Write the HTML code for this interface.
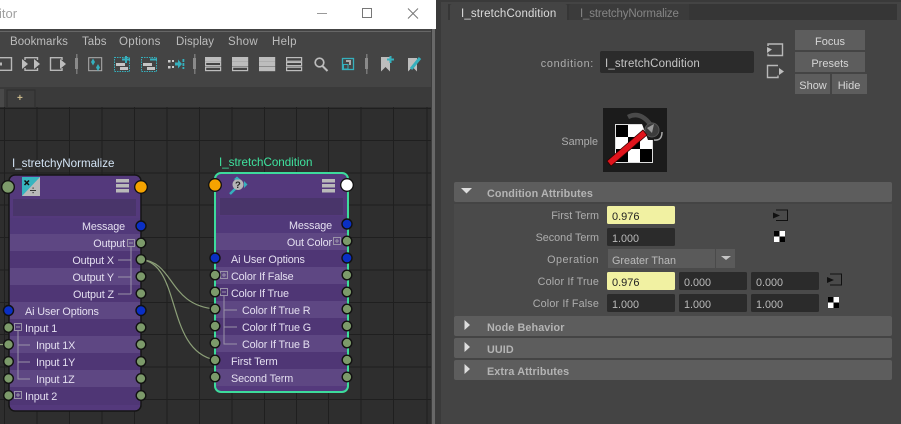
<!DOCTYPE html>
<html><head><meta charset="utf-8"><style>
html,body{margin:0;padding:0;background:#444;width:901px;height:424px;overflow:hidden}
svg{display:block}
text{font-family:"Liberation Sans",sans-serif;font-size:11px}
.r{text-anchor:end}
.n{fill:#e4dff0;font-size:10.8px;letter-spacing:-.12px}
.l{fill:#adadad;font-size:10.8px}
.v{fill:#bbb;font-size:10.8px}
.m{fill:#bcbcbc;font-size:11.5px;letter-spacing:.05px}
.h{fill:#b4b4b4;font-size:10.8px;font-weight:bold;letter-spacing:.1px}
.b{fill:#d6d6d6;font-size:11px;text-anchor:middle}
.p{fill:#7c9a6a;stroke:#111;stroke-width:1.4}
.u{fill:#0a2fc4;stroke:#111;stroke-width:1.4}
.t{fill:none;stroke:#9a93a8;stroke-width:1}
.g{fill:none;stroke:#1f1f1f;stroke-width:1}
.i{fill:none;stroke:#b8b8b8;stroke-width:1.4}
.f{fill:#bdbdbd}
.c{fill:#35b0bd}
.cs{fill:none;stroke:#35b0bd;stroke-width:1.3}
</style></head><body>
<svg width="901" height="424" viewBox="0 0 901 424" xmlns="http://www.w3.org/2000/svg">
<rect width="901" height="424" fill="#444"/>
<!-- left window -->
<rect x="0" y="0" width="436" height="29" fill="#fff"/>
<text x="-1" y="18" style="font-size:13px;fill:#a0a0a0">itor</text>
<path d="M317 13.500H327" stroke="#999" stroke-width="1"/>
<rect x="362.500" y="8.500" width="9" height="9" fill="none" stroke="#777"/>
<path d="M408 8.500L418 18.500M418 8.500L408 18.500" stroke="#777" stroke-width="1"/>
<rect x="0" y="29" width="434" height="58" fill="#444"/>
<path d="M0 31.500H434" stroke="#666" stroke-width="1" fill="none"/>
<text class="m" x="10" y="45">Bookmarks</text>
<text class="m" x="82" y="45">Tabs</text>
<text class="m" x="119" y="45" style="letter-spacing:.3px">Options</text>
<text class="m" x="176" y="45">Display</text>
<text class="m" x="228" y="45" style="letter-spacing:.3px">Show</text>
<text class="m" x="272" y="45" style="letter-spacing:.3px">Help</text>
<!-- toolbar -->
<path class="i" d="M-2 57.700H11.500V70.300H-2"/><rect x="-1" y="62.500" width="3" height="3" fill="#b8b8b8"/>
<path class="i" d="M25 60V57.700H37.500V60M25 68V70.300H37.500V68"/><path class="f" d="M22 59L28 64L22 69ZM34 59L40 64L34 69Z"/>
<path class="i" d="M62 60V57.700H50.500V70.300H62V68"/><path class="f" d="M60 59L66 64L60 69Z"/>
<rect x="76" y="54" width="1.500" height="20" fill="#777"/><rect x="75" y="58" width="3" height="11" fill="#8a8a8a"/>
<rect x="88.700" y="57.700" width="13" height="13" fill="none" stroke="#b0b0b0"/>
<path class="c" d="M93 58.500L95 62L93 65.500L91 62ZM98 64L100 67.500L98 71L96 67.500Z"/>
<rect x="114.500" y="57.500" width="15" height="14" fill="none" stroke="#35b0bd" stroke-dasharray="1.500 1"/>
<rect x="116" y="63" width="9" height="3" fill="#c4c4c4"/><rect x="120" y="67" width="8" height="3" fill="#c4c4c4"/>
<path d="M122 59.500H130M126 56V63" stroke="#35b0bd" stroke-width="2"/>
<rect x="141.500" y="57.500" width="15" height="14" fill="none" stroke="#35b0bd" stroke-dasharray="1.500 1"/>
<rect x="143" y="63" width="9" height="3" fill="#c4c4c4"/><rect x="147" y="67" width="8" height="3" fill="#c4c4c4"/>
<rect x="150" y="58.500" width="7" height="2" fill="#35b0bd"/>
<rect x="168" y="60" width="2.500" height="2.500" fill="#ccc"/><rect x="172" y="60" width="2" height="2" fill="#ccc"/><rect x="168" y="66" width="2.500" height="2.500" fill="#ccc"/><rect x="172" y="66" width="2" height="2" fill="#ccc"/>
<path class="c" d="M175 62.500H178V59.500L182 64L178 68.500V65.500H175Z"/><rect x="182.500" y="59" width="1.800" height="3" fill="#35b0bd"/><rect x="182.500" y="63" width="1.800" height="3" fill="#35b0bd"/><rect x="182.500" y="67" width="1.800" height="2" fill="#35b0bd"/>
<rect x="194" y="54" width="1.500" height="20" fill="#777"/><rect x="193" y="58" width="3" height="11" fill="#8a8a8a"/>
<!-- stacks -->
<g fill="none" stroke="#bdbdbd" stroke-width="1.200">
<rect x="205.600" y="57.600" width="15" height="3.600" fill="#bdbdbd"/><rect x="205.600" y="62.400" width="15" height="3.200"/><rect x="205.600" y="67.200" width="15" height="3.400"/>
<rect x="232.600" y="57.600" width="15" height="3.600" fill="#bdbdbd"/><rect x="232.600" y="62.400" width="15" height="3.200" fill="#bdbdbd"/><rect x="232.600" y="67.200" width="15" height="3.400"/>
<rect x="259.600" y="57.600" width="15" height="3.600" fill="#bdbdbd"/><rect x="259.600" y="62.400" width="15" height="3.200" fill="#bdbdbd"/><rect x="259.600" y="67.200" width="15" height="3.400" fill="#bdbdbd"/>
<rect x="286.600" y="57.600" width="15" height="3.600"/><rect x="286.600" y="62.400" width="15" height="3.200"/><rect x="286.600" y="67.200" width="15" height="3.400"/>
</g>
<circle cx="319.500" cy="62.500" r="4.300" fill="none" stroke="#bdbdbd" stroke-width="1.700"/>
<path d="M322.500 66L327.500 71" stroke="#bdbdbd" stroke-width="2"/>
<rect x="342.500" y="58.500" width="11" height="11" fill="none" stroke="#35b0bd" stroke-width="1.300"/>
<rect x="343.500" y="64.500" width="4.500" height="4.500" fill="none" stroke="#35b0bd"/>
<path d="M346 60H351V65H349V62H346Z" fill="#aaa"/>
<rect x="366" y="54" width="1.500" height="20" fill="#777"/><rect x="365" y="58" width="3" height="11" fill="#8a8a8a"/>
<path class="f" d="M381 57H390V71.500L385.500 67L381 71.500Z"/>
<path d="M387 59.500H394M390.500 56V63" stroke="#35b0bd" stroke-width="2"/>
<path class="f" d="M408 58H417V71.500L412.500 67L408 71.500Z"/>
<path d="M411 69L420 58" stroke="#35b0bd" stroke-width="3"/>
<!-- tabs row -->
<rect x="0" y="87" width="432" height="20" fill="#3a3a3a"/>
<rect x="0" y="89" width="4" height="18" fill="#494949"/>
<path d="M7 107V90H35V107" fill="#3c3c3c" stroke="#2d2d2d"/>
<text x="17" y="101" style="font-size:10px;font-weight:bold;fill:#c9b88a">+</text>
<!-- canvas -->
<rect x="0" y="107" width="431" height="317" fill="#2e2e2e"/>
<path class="g" d="M4.500 107V424M37 107V424M69.500 107V424M102 107V424M134.500 107V424M167 107V424M199.500 107V424M232 107V424M264.500 107V424M296.500 107V424M328.500 107V424M361 107V424M393.500 107V424M427 107V424M0 108.500H431M0 140.500H431M0 173H431M0 205H431M0 237.500H431M0 270H431M0 302.500H431M0 334.500H431M0 367H431M0 399.500H431"/>
<!-- gutter -->
<rect x="431" y="29" width="5" height="395" fill="#3b3b3b"/>
<rect x="432" y="29" width="3" height="395" fill="#686868"/>
<rect x="436" y="0" width="5" height="424" fill="#3a3a3a"/>
<!-- wires -->
<g fill="none" stroke="#8c9f78" stroke-width="1.200">
<path d="M141 259.500C175 262 168 305 215 309"/>
<path d="M141 259.500C182 264 165 350 215 360"/>
<path d="M0 344.500H9"/>
</g>
<!-- left node -->
<text x="12" y="167" style="font-size:11.600px;fill:#d3e4f5">I_stretchyNormalize</text>
<rect x="9" y="175" width="132" height="236" rx="6" fill="#54397c" stroke="#151515" stroke-width="1.500"/>
<rect x="10" y="218" width="130" height="17" fill="#51397a"/>
<rect x="10" y="234" width="130" height="17" fill="#5e4783"/>
<rect x="10" y="251" width="130" height="17" fill="#4f3675"/>
<rect x="10" y="268" width="130" height="17" fill="#5e4783"/>
<rect x="10" y="285" width="130" height="17" fill="#4f3675"/>
<rect x="10" y="302" width="130" height="17" fill="#5e4783"/>
<rect x="10" y="319" width="130" height="17" fill="#4f3675"/>
<rect x="10" y="336" width="130" height="17" fill="#5e4783"/>
<rect x="10" y="353" width="130" height="17" fill="#4f3675"/>
<rect x="10" y="370" width="130" height="17" fill="#5e4783"/>
<rect x="10" y="387" width="130" height="18" fill="#4f3675"/>
<rect x="13" y="199" width="123" height="17" fill="#49356a"/>
<rect x="22" y="177" width="18" height="19" fill="#36b4bf"/>
<path d="M40 177V196H22Z" fill="#b9b9b9"/>
<path d="M24.500 180.500L29 185M29 180.500L24.500 185" stroke="#111" stroke-width="1.500"/>
<path d="M30 190.500H36" stroke="#333" stroke-width="1"/><rect x="32.500" y="187.500" width="1.200" height="1.200" fill="#333"/><rect x="32.500" y="192" width="1.200" height="1.200" fill="#333"/>
<rect x="116" y="179" width="13" height="3.500" fill="#b9b9b9"/><rect x="116" y="184" width="13" height="3.500" fill="#b9b9b9"/><rect x="116" y="189" width="13" height="3.500" fill="#b9b9b9"/>
<text class="n r" x="125" y="230">Message</text>
<text class="n r" x="125" y="247">Output</text>
<text class="n r" x="114" y="264">Output X</text>
<text class="n r" x="114" y="281">Output Y</text>
<text class="n r" x="114" y="298">Output Z</text>
<text class="n" x="25" y="315">Ai User Options</text>
<text class="n" x="25" y="332">Input 1</text>
<text class="n" x="36" y="349">Input 1X</text>
<text class="n" x="36" y="366">Input 1Y</text>
<text class="n" x="36" y="383">Input 1Z</text>
<text class="n" x="25" y="400">Input 2</text>
<rect class="t" x="127.500" y="239.500" width="7" height="7"/><path class="t" d="M129 243H133M131 247V294M118 260H131M118 277H131M118 294H131"/>
<rect class="t" x="14.500" y="323.500" width="7" height="7"/><path class="t" d="M16 327H20M18 331V379.500M18 345H30M18 362H30M18 379H30"/>
<rect class="t" x="14.500" y="391.500" width="7" height="7"/><path class="t" d="M16 395H20M18 393V397"/>
<circle class="p" cx="8" cy="187" r="6.300"/>
<circle cx="141" cy="187" r="6.300" fill="#f5a300" stroke="#111" stroke-width="1.300"/>
<circle class="u" cx="141" cy="226" r="5"/>
<circle class="p" cx="141" cy="243" r="4.800"/>
<circle class="p" cx="141" cy="259.500" r="4.800"/>
<circle class="p" cx="141" cy="276.500" r="4.800"/>
<circle class="p" cx="141" cy="293.500" r="4.800"/>
<circle class="u" cx="8.500" cy="310.500" r="5"/>
<circle class="u" cx="141" cy="310.500" r="5"/>
<circle class="p" cx="8.500" cy="327.500" r="4.800"/><circle class="p" cx="141" cy="327.500" r="4.800"/>
<circle class="p" cx="8.500" cy="344.500" r="4.800"/><circle class="p" cx="141" cy="344.500" r="4.800"/>
<circle class="p" cx="8.500" cy="361.500" r="4.800"/><circle class="p" cx="141" cy="361.500" r="4.800"/>
<circle class="p" cx="8.500" cy="378.500" r="4.800"/><circle class="p" cx="141" cy="378.500" r="4.800"/>
<circle class="p" cx="8.500" cy="395.500" r="4.800"/><circle class="p" cx="141" cy="395.500" r="4.800"/>
<!-- right node -->
<text x="219" y="166" style="font-size:11.600px;fill:#3fe39f">I_stretchCondition</text>
<rect x="215" y="173" width="133" height="219" rx="6" fill="#54397c" stroke="#3ddb9c" stroke-width="2"/>
<rect x="216" y="216" width="131" height="17" fill="#51397a"/>
<rect x="216" y="233" width="131" height="17" fill="#5e4783"/>
<rect x="216" y="250" width="131" height="17" fill="#4f3675"/>
<rect x="216" y="267" width="131" height="17" fill="#5e4783"/>
<rect x="216" y="284" width="131" height="17" fill="#4f3675"/>
<rect x="216" y="301" width="131" height="17" fill="#5e4783"/>
<rect x="216" y="318" width="131" height="17" fill="#4f3675"/>
<rect x="216" y="335" width="131" height="17" fill="#5e4783"/>
<rect x="216" y="352" width="131" height="17" fill="#4f3675"/>
<rect x="216" y="369" width="131" height="17" fill="#5e4783"/>
<rect x="220" y="198" width="123" height="17" fill="#49356a"/>
<path d="M230 194L236 188" stroke="#35b0bd" stroke-width="2.500"/>
<circle cx="238" cy="184.500" r="5.500" fill="#b5b5b5"/>
<text x="235" y="188" style="font-size:9.500px;font-weight:bold;fill:#222">?</text>
<path class="c" d="M237 176.500L240.500 179.500H233.500ZM247.500 184.500L244 181V188Z"/>
<rect x="322" y="179" width="13" height="3.500" fill="#b9b9b9"/><rect x="322" y="184" width="13" height="3.500" fill="#b9b9b9"/><rect x="322" y="189" width="13" height="3.500" fill="#b9b9b9"/>
<text class="n r" x="332" y="229">Message</text>
<text class="n r" x="332" y="246">Out Color</text>
<text class="n" x="231" y="263">Ai User Options</text>
<text class="n" x="231" y="280">Color If False</text>
<text class="n" x="231" y="297">Color If True</text>
<text class="n" x="242" y="314">Color If True R</text>
<text class="n" x="242" y="331">Color If True G</text>
<text class="n" x="242" y="348">Color If True B</text>
<text class="n" x="231" y="365">First Term</text>
<text class="n" x="231" y="382">Second Term</text>
<rect class="t" x="333.500" y="237.500" width="7" height="7"/><path class="t" d="M335 241H339M337 239V243"/>
<rect class="t" x="220.500" y="271.500" width="7" height="7"/><path class="t" d="M222 275H226M224 273V277"/>
<rect class="t" x="220.500" y="288.500" width="7" height="7"/><path class="t" d="M222 292H226M224 296V344.500M224 310H237M224 327H237M224 344H237"/>
<circle cx="215" cy="185" r="6.300" fill="#f5a300" stroke="#111" stroke-width="1.300"/>
<circle cx="347" cy="185" r="6.300" fill="#fff" stroke="#111" stroke-width="1.300"/>
<circle class="u" cx="347" cy="224" r="5"/>
<circle class="p" cx="347" cy="241" r="4.800"/>
<circle class="u" cx="215" cy="258" r="5"/><circle class="u" cx="347" cy="258" r="5"/>
<circle class="p" cx="215" cy="275" r="4.800"/><circle class="p" cx="347" cy="275" r="4.800"/>
<circle class="p" cx="215" cy="292" r="4.800"/><circle class="p" cx="347" cy="292" r="4.800"/>
<circle class="p" cx="215" cy="309" r="4.800"/><circle class="p" cx="347" cy="309" r="4.800"/>
<circle class="p" cx="215" cy="326" r="4.800"/><circle class="p" cx="347" cy="326" r="4.800"/>
<circle class="p" cx="215" cy="343" r="4.800"/><circle class="p" cx="347" cy="343" r="4.800"/>
<circle class="p" cx="215" cy="360" r="4.800"/><circle class="p" cx="347" cy="360" r="4.800"/>
<circle class="p" cx="215" cy="377" r="4.800"/><circle class="p" cx="347" cy="377" r="4.800"/>
<!-- right panel -->
<rect x="441" y="0" width="460" height="424" fill="#444"/>
<rect x="441" y="0" width="460" height="2" fill="#3a3a3a"/>
<rect x="448" y="4" width="449" height="16" fill="#363636"/>
<path d="M450 20V6Q450 4 452 4H565Q567 4 567 6V20Z" fill="#444"/>
<path d="M569 20V6Q569 4 571 4H689V20Z" fill="#3b3b3b"/>
<text x="461" y="17" style="font-size:11.500px;fill:#dcdcdc;letter-spacing:.15px">I_stretchCondition</text>
<text x="580" y="17" style="font-size:11.500px;fill:#858585;letter-spacing:-.15px">I_stretchyNormalize</text>
<text class="l r" x="594" y="67" style="letter-spacing:.7px">condition:</text>
<rect x="600" y="51" width="154" height="22" rx="2" fill="#2b2b2b"/>
<text x="605" y="67" style="font-size:11.500px;fill:#c6c6c6;letter-spacing:.12px">I_stretchCondition</text>
<path class="i" d="M768 46V44H782.500V55.500H768V53.500" stroke="#999"/><path class="f" d="M767 47L772 49.500L767 53Z"/>
<path class="i" d="M778 65.500H767.500V77.500H778V75.500"/><path class="f" d="M779 68L784 71.500L779 75Z"/>
<rect x="795" y="30" width="70" height="20" fill="#5d5d5d"/><text class="b" x="830" y="45">Focus</text>
<rect x="795" y="52" width="70" height="20" fill="#5d5d5d"/><text class="b" x="830" y="67">Presets</text>
<rect x="795" y="74" width="35" height="20" fill="#5d5d5d"/><text class="b" x="813" y="89">Show</text>
<rect x="832" y="74" width="35" height="20" fill="#5d5d5d"/><text class="b" x="849" y="89">Hide</text>
<text class="l r" x="598" y="145">Sample</text>
<rect x="603" y="108" width="64" height="64" fill="#1b1b1b"/>
<rect x="615.500" y="124.500" width="37" height="38" fill="#fff" stroke="#ddd"/>
<rect x="616" y="125" width="12" height="12" fill="#000"/><rect x="628" y="137" width="12" height="12" fill="#000"/><rect x="640" y="149" width="12" height="13" fill="#000"/><rect x="616" y="149" width="12" height="13" fill="#000"/>
<path d="M642 124H653V140H648Z" fill="#1b1b1b"/>
<path d="M628 117Q640 111 650 124" fill="none" stroke="#4a4a4a" stroke-width="4.500"/>
<circle cx="652" cy="130" r="7" fill="#3c3c3c" stroke="#555"/>
<path d="M654 140Q662 141 662 132" fill="none" stroke="#aaa" stroke-width="1.500"/>
<path d="M647 128L654 124L652 133Z" fill="#999"/>
<path d="M607 161L643 130L647 135L611 166Z" fill="#e0141c" stroke="#300" stroke-width=".8"/>
<!-- sections -->
<rect x="454" y="204" width="438" height="112" fill="#4a4a4a"/>
<rect x="454" y="182" width="438" height="20" rx="2" fill="#5d5d5d"/>
<rect x="454" y="316" width="438" height="20" rx="2" fill="#5d5d5d"/>
<rect x="454" y="338" width="438" height="20" rx="2" fill="#5d5d5d"/>
<rect x="454" y="360" width="438" height="20" rx="2" fill="#5d5d5d"/>
<path d="M461 188H472L466.500 193.500Z" fill="#ddd"/>
<path d="M464.500 320V330L470 325Z" fill="#ddd"/>
<path d="M464.500 342V352L470 347Z" fill="#ddd"/>
<path d="M464.500 364V374L470 369Z" fill="#ddd"/>
<text class="h" x="487" y="197">Condition Attributes</text>
<text class="h" x="487" y="331">Node Behavior</text>
<text class="h" x="487" y="353">UUID</text>
<text class="h" x="487" y="375">Extra Attributes</text>
<text class="l r" x="599" y="219">First Term</text>
<text class="l r" x="599" y="241">Second Term</text>
<text class="l r" x="599" y="263" style="letter-spacing:.5px">Operation</text>
<text class="l r" x="599" y="285" style="letter-spacing:.15px">Color If True</text>
<text class="l r" x="599" y="307" style="letter-spacing:.15px">Color If False</text>
<rect x="607" y="206" width="68" height="18" rx="1.500" fill="#f1f1a2"/><text x="612" y="220" style="fill:#222;font-size:11px">0.976</text>
<rect x="607" y="228" width="68" height="18" rx="1.500" fill="#2b2b2b"/><text class="v" x="612" y="242">1.000</text>
<rect x="608" y="249" width="107" height="19" fill="#5a5a5a"/><text class="v" x="612" y="264">Greater Than</text>
<rect x="716" y="249" width="19" height="19" fill="#5a5a5a"/><path d="M721 256H731L726 260Z" fill="#c4c4c4"/>
<rect x="607" y="272" width="68" height="18" rx="1.500" fill="#f1f1a2"/><text x="612" y="286" style="fill:#222;font-size:11px">0.976</text>
<rect x="679" y="272" width="68" height="18" rx="1.500" fill="#2b2b2b"/><text class="v" x="684" y="286">0.000</text>
<rect x="751" y="272" width="68" height="18" rx="1.500" fill="#2b2b2b"/><text class="v" x="756" y="286">0.000</text>
<rect x="607" y="294" width="68" height="18" rx="1.500" fill="#2b2b2b"/><text class="v" x="612" y="308">1.000</text>
<rect x="679" y="294" width="68" height="18" rx="1.500" fill="#2b2b2b"/><text class="v" x="684" y="308">1.000</text>
<rect x="751" y="294" width="68" height="18" rx="1.500" fill="#2b2b2b"/><text class="v" x="756" y="308">1.000</text>
<path d="M776 210H787.500V220.500H776" fill="none" stroke="#111"/><path d="M773 212.500L780 215.500L773 218.500Z" fill="#111"/>
<path d="M830 274H841.500V285H830" fill="none" stroke="#111"/><path d="M827 277L834 280L827 283Z" fill="#111"/>
<rect x="774" y="231" width="11" height="11" fill="#fff"/><rect x="774" y="231" width="5.500" height="5.500" fill="#000"/><rect x="779.500" y="236.500" width="5.500" height="5.500" fill="#000"/>
<rect x="828" y="297" width="11" height="11" fill="#fff"/><rect x="828" y="297" width="5.500" height="5.500" fill="#000"/><rect x="833.500" y="302.500" width="5.500" height="5.500" fill="#000"/>
</svg>
</body></html>
